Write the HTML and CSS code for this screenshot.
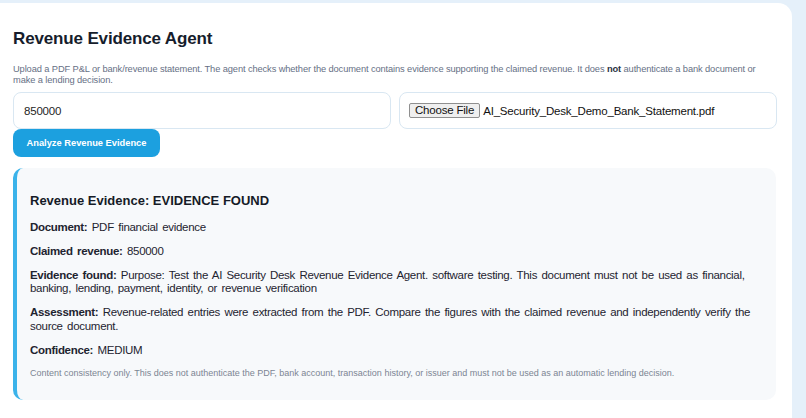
FILE: index.html
```html
<!DOCTYPE html>
<html lang="en">
<head>
<meta charset="utf-8">
<title>Revenue Evidence Agent</title>
<link rel="stylesheet" href="styles.css">
</head>
<body>
<main class="card">
  <h1 class="title">Revenue Evidence Agent</h1>
  <p class="desc">Upload a PDF P&amp;L or bank/revenue statement. The agent checks whether the document contains evidence supporting the claimed revenue. It does <b>not</b> authenticate a bank document or make a lending decision.</p>
  <div class="inputs">
    <div class="field"><span class="value">850000</span></div>
    <div class="field file">
      <span class="choose">Choose File</span>
      <span class="fname">AI_Security_Desk_Demo_Bank_Statement.pdf</span>
    </div>
  </div>
  <button class="analyze" type="button">Analyze Revenue Evidence</button>
  <section class="result">
    <h3 class="result-title">Revenue Evidence: EVIDENCE FOUND</h3>
    <p><b>Document:</b> PDF financial evidence</p>
    <p><b>Claimed revenue:</b> 850000</p>
    <p><b>Evidence found:</b> Purpose: Test the AI Security Desk Revenue Evidence Agent. software testing. This document must not be used as financial, banking, lending, payment, identity, or revenue verification</p>
    <p><b>Assessment:</b> Revenue-related entries were extracted from the PDF. Compare the figures with the claimed revenue and independently verify the source document.</p>
    <p><b>Confidence:</b> MEDIUM</p>
    <p class="note">Content consistency only. This does not authenticate the PDF, bank account, transaction history, or issuer and must not be used as an automatic lending decision.</p>
  </section>
</main>
</body>
</html>
```
FILE: styles.css
```css
* { box-sizing: border-box; }
html, body { margin: 0; padding: 0; }
body {
  background: #e5f0fa;
  font-family: "Liberation Sans", Arial, sans-serif;
  height: 418px;
  overflow: hidden;
}
.card {
  background: #ffffff;
  margin-top: 3px;
  width: 792px;
  min-height: 430px;
  border-radius: 0 14px 0 0;
  padding: 26px 15px 20px 13px;
}
.title {
  margin: 0;
  font-size: 17px;
  line-height: 20px;
  letter-spacing: -0.15px;
  font-weight: 700;
  color: #161d2c;
}
.desc {
  margin: 15px 0 0;
  font-size: 9.3px;
  line-height: 11px;
  letter-spacing: -0.11px;
  color: #667085;
}
.desc b { color: #2b3342; }
.inputs {
  display: grid;
  grid-template-columns: 1fr 1fr;
  gap: 8px;
  margin-top: 6px;
}
.field {
  height: 37px;
  border: 1px solid #d9e7f2;
  border-radius: 8px;
  display: flex;
  align-items: center;
  padding-left: 10px;
  font-size: 11.5px;
  color: #1f1f1f;
  background: #fff;
}
.value { letter-spacing: -0.2px; }
.file { padding-left: 9px; }
.choose {
  display: inline-block;
  height: 15px;
  line-height: 13px;
  padding: 0 5px;
  background: #efefef;
  border: 1px solid #8f8f8f;
  border-radius: 2px;
  font-size: 11.5px;
  letter-spacing: -0.2px;
  color: #111;
}
.fname {
  margin-left: 3px;
  letter-spacing: -0.2px;
  color: #111;
}
.analyze {
  display: block;
  margin-top: 0;
  width: 147px;
  height: 28px;
  border: none;
  border-radius: 8px;
  background: #1ca0df;
  color: #fff;
  font-family: "Liberation Sans", Arial, sans-serif;
  font-size: 9.3px;
  font-weight: 700;
  padding: 0;
}
.result {
  margin-top: 11px;
  width: 763px;
  background: #f7f9fb;
  border-left: 4px solid #3bb3ea;
  border-radius: 10px;
  padding: 25px 14px 22px 13px;
}
.result-title {
  margin: 0 0 13px;
  font-size: 13px;
  line-height: 15px;
  font-weight: 700;
  color: #151b27;
}
.result p {
  margin: 0 0 10px;
  font-size: 11.5px;
  line-height: 13.8px;
  letter-spacing: -0.3px;
  word-spacing: 1.5px;
  color: #1e2430;
}
.result p.note {
  margin: 0;
  font-size: 9px;
  line-height: 10.4px;
  letter-spacing: 0;
  word-spacing: 0;
  color: #7c8593;
}
```
